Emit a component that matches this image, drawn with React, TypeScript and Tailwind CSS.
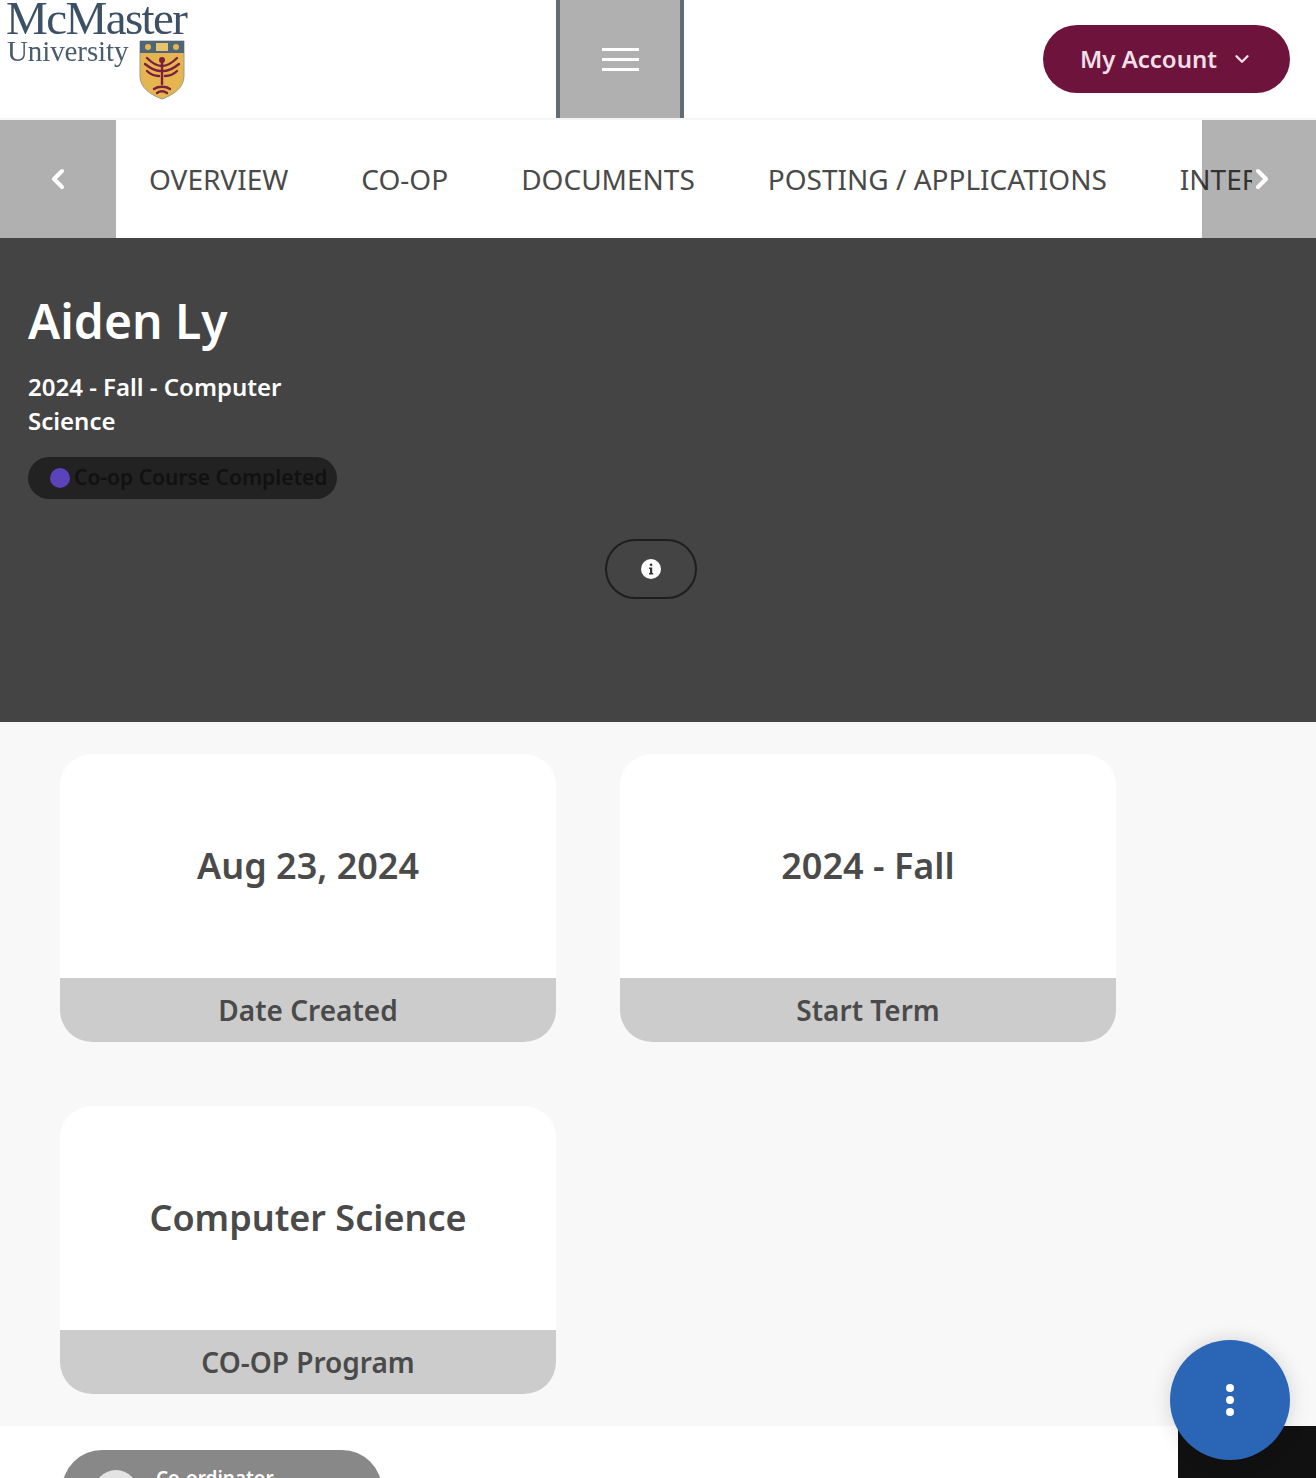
import { ChevronDown, ChevronLeft, ChevronRight } from "lucide-react";
import React from "react";

const tabs = ["OVERVIEW", "CO-OP", "DOCUMENTS", "POSTING / APPLICATIONS", "INTERVIEWS"];

const Logo = () => (
  <div className="relative w-[200px] h-[118px] overflow-hidden">
    <div className="absolute left-[6px] top-[-10px] text-[47px] leading-[56px] tracking-[-1.6px] text-[#3d5166] font-['Liberation_Serif',serif] blur-[0.4px]">
      McMaster
    </div>
    <div className="absolute left-[7px] top-[35px] text-[29px] leading-[32px] tracking-[-0.1px] text-[#4a5c6e] font-['Liberation_Serif',serif] blur-[0.4px]">
      University
    </div>
    <svg className="absolute left-[139px] top-[40px] blur-[0.4px]" width="46" height="60" viewBox="0 0 46 60">
      <path d="M1 1H45V36C45 48 34 55 23 59C12 55 1 48 1 36Z" fill="#e5b64f" stroke="#9a9a86" strokeWidth="1" />
      <rect x="1" y="1" width="44" height="12" fill="#4d6479" />
      <circle cx="9" cy="7" r="3" fill="#e5b64f" />
      <circle cx="37" cy="7" r="3" fill="#e5b64f" />
      <rect x="17" y="3" width="12" height="8" fill="#e5c36f" />
      <g stroke="#7c1f3f" strokeWidth="2.4" fill="none" strokeLinecap="round">
        <path d="M23 20V44" />
        <path d="M23 26C17 26 12 22 8 18M23 26C29 26 34 22 38 18" />
        <path d="M21 31C16 31 11 28 6 24M25 31C30 31 35 28 40 24" />
        <path d="M20 36C15 36 11 34 8 31M26 36C31 36 35 34 38 31" />
        <path d="M15 49C19 46 27 46 31 49M18 53C21 51 25 51 28 53" />
      </g>
      <circle cx="23" cy="20" r="3" fill="#7c1f3f" />
    </svg>
  </div>
);

const Header = () => (
  <header className="flex items-center justify-between h-[118px] bg-white pr-[26px]">
    <Logo />
    <button className="flex flex-col items-center justify-center gap-[7px] w-[128px] h-full ml-[356px] bg-[#b0b0b0] border-x-4 border-[#646c73]">
      <span className="block w-[37px] h-[3px] bg-white" />
      <span className="block w-[37px] h-[3px] bg-white" />
      <span className="block w-[37px] h-[3px] bg-white" />
    </button>
    <button className="flex items-center justify-center gap-[14px] ml-auto w-[247px] h-[68px] rounded-full bg-[#6e143c] text-[#f1dfe7] text-[24px] font-semibold">
      My Account
      <ChevronDown size={22} strokeWidth={2.6} />
    </button>
  </header>
);

const Tabs = () => (
  <nav className="relative flex h-[120px] bg-white border-t-2 border-[#f5f5f5]">
    <button className="flex items-center justify-center w-[116px] shrink-0 bg-[#b0b0b0] text-white">
      <ChevronLeft size={32} strokeWidth={3} />
    </button>
    <div className="flex items-center gap-[73px] w-[1136px] pl-[33px] overflow-hidden text-[28px] text-[#4a4a4a] whitespace-nowrap">
      {tabs.map((tab) => (
        <span key={tab}>{tab}</span>
      ))}
    </div>
    <button className="absolute top-0 bottom-0 right-0 w-[114px] flex items-center pl-[44px] bg-black/30 text-white">
      <ChevronRight size={32} strokeWidth={3} />
    </button>
  </nav>
);

const Hero = () => (
  <section className="relative h-[484px] bg-[#444444] pt-[50px] pl-[28px] text-white">
    <h1 className="text-[48px] leading-[66px] font-semibold">Aiden Ly</h1>
    <p className="mt-[16px] w-[300px] text-[24px] leading-[34px] font-semibold">2024 - Fall - Computer Science</p>
    <div className="mt-[19px] flex items-center gap-[4px] w-[309px] h-[42px] pl-[22px] rounded-full bg-[#222222] text-[#111111] text-[21px] font-semibold whitespace-nowrap">
      <span className="w-[20px] h-[20px] rounded-full bg-[#5a43bb] shrink-0" />
      Co-op Course Completed
    </div>
    <div className="mt-[40px] ml-[577px] flex items-center justify-center w-[92px] h-[60px] rounded-full border-2 border-[#1e1e1e]">
      <svg width="20" height="20" viewBox="0 0 20 20">
        <circle cx="10" cy="10" r="10" fill="white" />
        <rect x="8.8" y="4.4" width="2.6" height="2.6" rx="1.3" fill="#333333" />
        <path d="M8 8.6H11.2V14H12.2V15.4H8V14H9V10H8Z" fill="#333333" />
      </svg>
    </div>
  </section>
);

const Card = ({ value, label }: { value: string; label: string }) => (
  <div className="flex flex-col w-[496px] h-[288px] rounded-[32px] overflow-hidden bg-white text-[#4a4a4a] font-semibold">
    <div className="flex-1 flex items-center justify-center text-[36px]">{value}</div>
    <div className="flex items-center justify-center h-[64px] bg-[#cccccc] text-[28px]">{label}</div>
  </div>
);

const App = () => {
  return (
    <div className="relative w-[1316px] h-[1478px] overflow-hidden bg-white font-['Noto_Sans',sans-serif]">
      <Header />
      <Tabs />
      <Hero />
      <main className="grid grid-cols-[496px_496px] gap-[64px] h-[704px] px-[60px] pt-[32px] bg-[#f8f8f8] content-start">
        <Card value="Aug 23, 2024" label="Date Created" />
        <Card value="2024 - Fall" label="Start Term" />
        <Card value="Computer Science" label="CO-OP Program" />
      </main>
      <section className="flex justify-between h-[52px] pt-[24px] pl-[62px]">
        <div className="flex w-[320px] h-[80px] rounded-[40px] bg-[#888888] pl-[32px] pt-[20px] text-white text-[19px] font-semibold">
          <span className="w-[44px] h-[44px] rounded-full bg-[#e3e3e3] shrink-0" />
          <span className="ml-[18px] -mt-[6px]">Co-ordinator</span>
        </div>
      </section>
      <div className="absolute right-0 bottom-0 w-[138px] h-[52px] bg-[#111111]" />
      <button className="absolute left-[1170px] top-[1340px] flex flex-col items-center justify-center gap-[4px] w-[120px] h-[120px] rounded-full bg-[#2b65b5] shadow-[0_0_20px_rgba(0,0,0,0.15)]">
        <span className="w-[8px] h-[8px] rounded-full bg-white" />
        <span className="w-[8px] h-[8px] rounded-full bg-white" />
        <span className="w-[8px] h-[8px] rounded-full bg-white" />
      </button>
    </div>
  );
};

export default App;
